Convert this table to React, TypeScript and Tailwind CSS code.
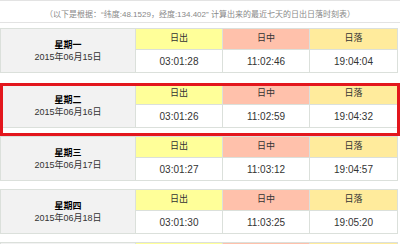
const days = [
  { week: "星期一", date: "2015年06月15日", rise: "03:01:28", noon: "11:02:46", set: "19:04:04" },
  { week: "星期二", date: "2015年06月16日", rise: "03:01:26", noon: "11:02:59", set: "19:04:32", today: true },
  { week: "星期三", date: "2015年06月17日", rise: "03:01:27", noon: "11:03:12", set: "19:04:57" },
  { week: "星期四", date: "2015年06月18日", rise: "03:01:30", noon: "11:03:25", set: "19:05:20" },
  { week: "星期五", date: "2015年06月19日", rise: "03:01:34", noon: "11:03:38", set: "19:05:41" },
];

type Day = (typeof days)[number];

function DayTable({ d }: { d: Day }) {
  return (
    <div className="grid w-[398px] grid-cols-[134px_86px_86px_87px] grid-rows-[20px_22px] gap-px border border-[#dbe0db] bg-[#dbe0db] text-[#333]">
      <div className="row-span-2 flex flex-col items-center justify-center bg-[#f2f2f2] text-[9px] leading-[12px]">
        <span className="font-bold text-black">{d.week}</span>
        <span>{d.date}</span>
      </div>
      <div className="flex items-center justify-center bg-[#ffff99] text-[9px]">日出</div>
      <div className="flex items-center justify-center bg-[#ffc1ab] text-[9px]">日中</div>
      <div className="flex items-center justify-center bg-[#ffeb9c] text-[9px]">日落</div>
      <div className="flex items-center justify-center bg-white text-[10px]">{d.rise}</div>
      <div className="flex items-center justify-center bg-white text-[10px]">{d.noon}</div>
      <div className="flex items-center justify-center bg-white text-[10px]">{d.set}</div>
    </div>
  );
}

export default function App() {
  return (
    <div className="h-[244px] w-[400px] overflow-hidden bg-white font-['Liberation_Sans','Noto_Sans_CJK_SC',sans-serif]">
      <div className="mb-[5px] flex h-[23px] items-center justify-center border-y border-[#e3e3e3] pt-[7px] text-[8px] text-[#888]">
        （以下是根据：“纬度:48.1529，经度:134.402” 计算出来的最近七天的日出日落时刻表）
      </div>
      {days.map((d) => (
        <div
          key={d.date}
          className={d.today ? "mt-[2px] pb-2 outline-3 -outline-offset-3 outline-[#e3161d]" : "pb-2"}
        >
          <DayTable d={d} />
        </div>
      ))}
    </div>
  );
}
